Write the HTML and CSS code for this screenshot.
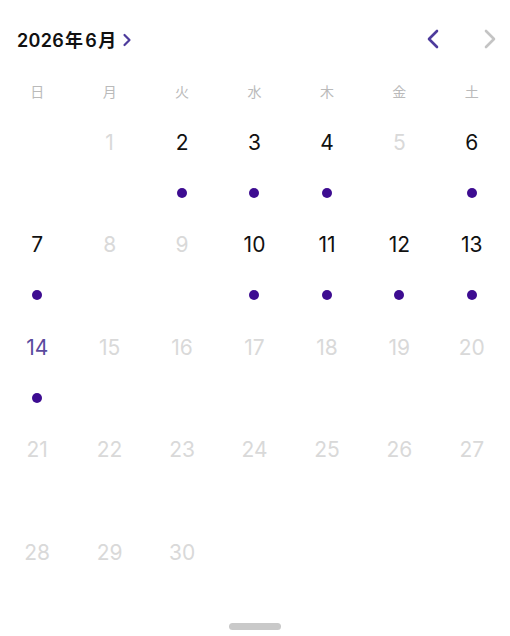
FILE: index.html
```html
<!DOCTYPE html>
<html lang="ja">
<head>
<meta charset="utf-8">
<link rel="stylesheet" href="styles.css">
</head>
<body>
<div class="cal">
  <div class="header">
    <div class="title"><span class="title-text">2026<span class="kj">年</span>6<span class="kj">月</span></span>
      <svg class="title-chev" width="10" height="14" viewBox="0 0 10 14"><path d="M2.5 2 L7.5 7 L2.5 12" fill="none" stroke="#4d3b9c" stroke-width="2.2" stroke-linecap="round" stroke-linejoin="round"/></svg>
    </div>
    <div class="nav">
      <svg class="nav-btn" width="14" height="20" viewBox="0 0 14 20"><path d="M11 2 L3 10 L11 18" fill="none" stroke="#4d3b9c" stroke-width="2.6" stroke-linecap="round" stroke-linejoin="round"/></svg>
      <svg class="nav-btn" width="14" height="20" viewBox="0 0 14 20"><path d="M3 2 L11 10 L3 18" fill="none" stroke="#c4c4c4" stroke-width="2.6" stroke-linecap="round" stroke-linejoin="round"/></svg>
    </div>
  </div>
  <div class="weekdays">
    <span>日</span><span>月</span><span>火</span><span>水</span><span>木</span><span>金</span><span>土</span>
  </div>
  <div class="grid">
    <div class="cell"></div>
    <div class="cell"><span class="num off">1</span></div>
    <div class="cell"><span class="num">2</span><span class="dot"></span></div>
    <div class="cell"><span class="num">3</span><span class="dot"></span></div>
    <div class="cell"><span class="num">4</span><span class="dot"></span></div>
    <div class="cell"><span class="num off">5</span></div>
    <div class="cell"><span class="num">6</span><span class="dot"></span></div>

    <div class="cell"><span class="num">7</span><span class="dot"></span></div>
    <div class="cell"><span class="num off">8</span></div>
    <div class="cell"><span class="num off">9</span></div>
    <div class="cell"><span class="num">10</span><span class="dot"></span></div>
    <div class="cell"><span class="num">11</span><span class="dot"></span></div>
    <div class="cell"><span class="num">12</span><span class="dot"></span></div>
    <div class="cell"><span class="num">13</span><span class="dot"></span></div>

    <div class="cell"><span class="num today">14</span><span class="dot"></span></div>
    <div class="cell"><span class="num off">15</span></div>
    <div class="cell"><span class="num off">16</span></div>
    <div class="cell"><span class="num off">17</span></div>
    <div class="cell"><span class="num off">18</span></div>
    <div class="cell"><span class="num off">19</span></div>
    <div class="cell"><span class="num off">20</span></div>

    <div class="cell"><span class="num off">21</span></div>
    <div class="cell"><span class="num off">22</span></div>
    <div class="cell"><span class="num off">23</span></div>
    <div class="cell"><span class="num off">24</span></div>
    <div class="cell"><span class="num off">25</span></div>
    <div class="cell"><span class="num off">26</span></div>
    <div class="cell"><span class="num off">27</span></div>

    <div class="cell"><span class="num off">28</span></div>
    <div class="cell"><span class="num off">29</span></div>
    <div class="cell"><span class="num off">30</span></div>
  </div>
  <div class="handle-wrap"><div class="handle"></div></div>
</div>
</body>
</html>
```
FILE: styles.css
```css
html, body {
  margin: 0;
  padding: 0;
  background: #ffffff;
}
body {
  font-family: Inter, "Noto Sans CJK JP", sans-serif;
  color: #111111;
  width: 510px;
  height: 636px;
  overflow: hidden;
}
.cal {
  display: flex;
  flex-direction: column;
  height: 636px;
}
.header {
  height: 78px;
  display: flex;
  align-items: center;
  justify-content: space-between;
  padding: 0 13px 0 17px;
  box-sizing: border-box;
}
.title {
  display: flex;
  align-items: center;
  gap: 4px;
  font-size: 18px;
  font-weight: 600;
  letter-spacing: 0.3px;
}
.kj {
  margin: 0 2px 0 1px;
}
.title-chev {
  display: block;
  margin-top: 1px;
}
.nav {
  display: flex;
  align-items: center;
  gap: 43px;
}
.nav-btn {
  display: block;
}
.weekdays {
  display: grid;
  grid-template-columns: repeat(7, 1fr);
  padding: 0 2px 0 1px;
  height: 26px;
  align-items: center;
  font-size: 14px;
  color: #bababa;
  text-align: center;
}
.grid {
  display: grid;
  grid-template-columns: repeat(7, 1fr);
  grid-auto-rows: 102.4px;
  padding: 0 2px 0 1px;
}
.cell {
  display: flex;
  flex-direction: column;
  align-items: center;
  padding-top: 26px;
}
.num {
  font-size: 21px;
  line-height: 25px;
  color: #111111;
}
.num.off {
  color: #d9d9d9;
}
.num.today {
  color: #5a4a9e;
}
.dot {
  width: 10px;
  height: 10px;
  border-radius: 50%;
  background: #3d0c91;
  margin-top: 33px;
}
.handle-wrap {
  display: flex;
  justify-content: center;
  padding-top: 7px;
}
.handle {
  width: 52px;
  height: 7px;
  border-radius: 4px;
  background: #c9c9c9;
}
```
